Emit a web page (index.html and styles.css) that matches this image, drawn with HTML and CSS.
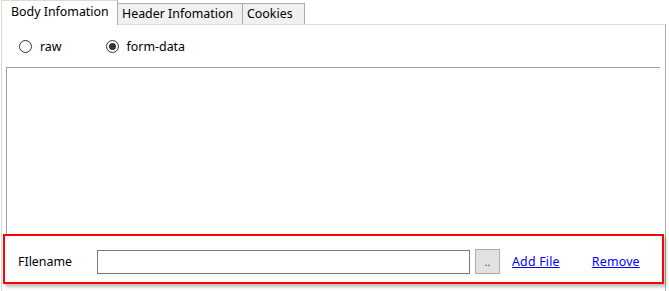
FILE: index.html
```html
<!DOCTYPE html>
<html lang="en">
<head>
    <meta charset="UTF-8">
    <title>Request Body</title>
    <link rel="stylesheet" href="styles.css">
</head>
<body>
    <div class="tabs">
        <div class="tab selected">Body Infomation</div>
        <div class="tab">Header Infomation</div>
        <div class="tab">Cookies</div>
    </div>
    <div class="panel">
        <div class="radio-row">
            <label class="radio"><span class="dot"></span>raw</label>
            <label class="radio checked"><span class="dot"></span>form-data</label>
        </div>
        <div class="body-box"></div>
        <div class="file-row">
            <span class="file-label">FIlename</span>
            <input class="file-input" type="text">
            <button class="browse">..</button>
            <a class="link" href="#">Add File</a>
            <a class="link remove" href="#">Remove</a>
        </div>
    </div>
</body>
</html>
```

FILE: styles.css
```css
* {
    box-sizing: border-box;
}

body {
    margin: 0;
    background-color: #ffffff;
    font-family: "Noto Sans", "Open Sans", sans-serif;
    font-size: 12.4px;
    color: #000000;
    width: 669px;
    height: 291px;
    overflow: hidden;
}

.tabs {
    display: flex;
    align-items: flex-end;
    padding-left: 1px;
    height: 24px;
    position: relative;
    z-index: 1;
}

.tab {
    height: 21px;
    line-height: 20px;
    padding: 0 4px;
    background-color: #f0f0f0;
    border: 1px solid #acacac;
    border-bottom: none;
    margin-left: -1px;
    white-space: nowrap;
}

.tab.selected {
    height: 25px;
    line-height: 21px;
    margin-left: 0;
    padding: 0 6px 0 9px;
    width: 117px;
    background-color: #ffffff;
    border-color: #d9d9d9 #acacac #ffffff #d9d9d9;
    margin-bottom: -1px;
}

.tab:nth-child(2) {
    width: 126px;
}

.tab:nth-child(3) {
    width: 63px;
}

.panel {
    margin-left: 1px;
    width: 665px;
    height: 267px;
    border: 1px solid #d9d9d9;
    border-right-color: #acacac;
    border-bottom: none;
    padding: 0 1px;
}

.radio-row {
    display: flex;
    align-items: center;
    height: 42px;
    padding-left: 16px;
}

.radio {
    display: flex;
    align-items: center;
    gap: 8px;
    margin-right: 44px;
}

.dot {
    width: 13px;
    height: 13px;
    border: 1px solid #333333;
    border-radius: 50%;
    background-color: #ffffff;
    display: flex;
    align-items: center;
    justify-content: center;
}

.checked .dot::after {
    content: "";
    width: 7px;
    height: 7px;
    border-radius: 50%;
    background-color: #333333;
}

.body-box {
    margin-left: 3px;
    width: 654px;
    height: 167px;
    border-top: 1px solid #a0a0a0;
    border-left: 1px solid #a0a0a0;
}

.file-row {
    display: flex;
    align-items: center;
    height: 50px;
    width: 661px;
    border: 2px solid #ff0000;
    box-shadow: 2px 3px 3px rgba(0, 0, 0, 0.25);
    padding: 5px 0 0 13px;
}

.file-label {
    width: 79px;
}

.file-input {
    width: 373px;
    height: 24px;
    border: 1px solid #7a7a7a;
    margin: 0;
}

.browse {
    width: 25px;
    height: 25px;
    margin-left: 5px;
    padding: 0;
    background-color: #e1e1e1;
    border: 1px solid #adadad;
    font-size: 10px;
    font-family: inherit;
    color: #333333;
}

.link {
    color: #0000ff;
    margin-left: 12px;
    letter-spacing: 0.2px;
}

.link.remove {
    margin-left: 32px;
}
```
